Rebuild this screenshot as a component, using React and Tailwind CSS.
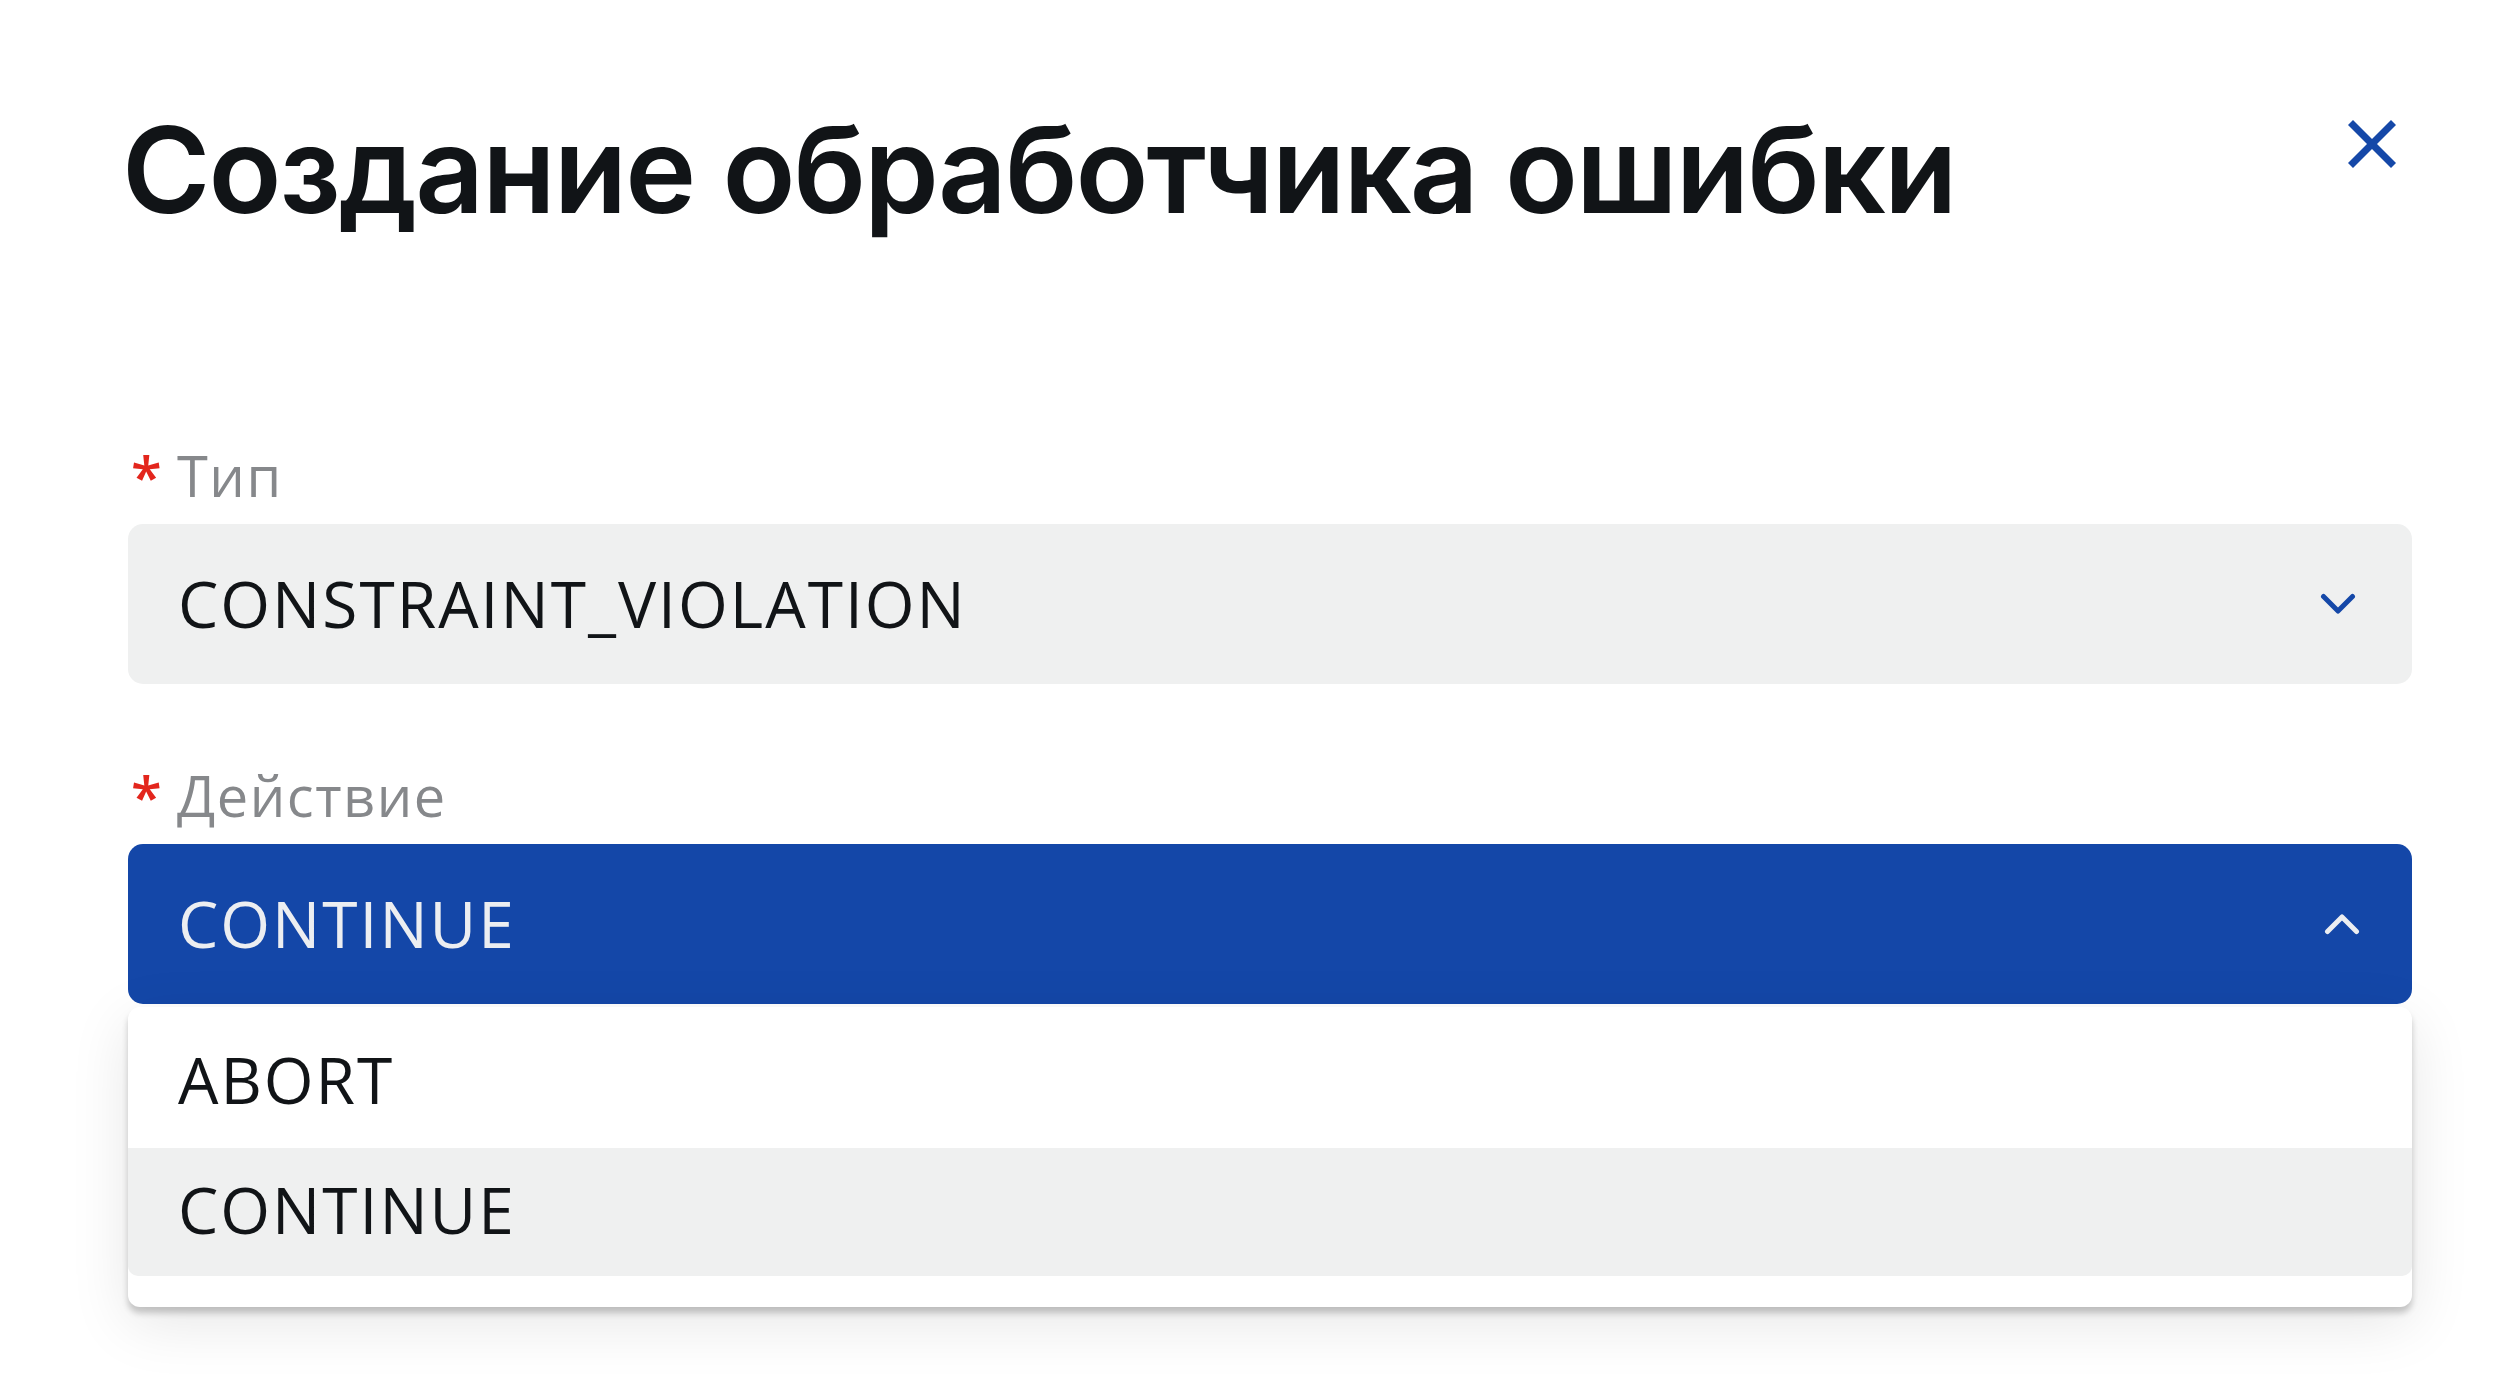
import React from "react";

function ChevronDown({ className }) {
  return (
    <svg viewBox="0 0 36 22" width="36" height="22" className={className} fill="none">
      <polyline points="3.5,3.5 18,18 32.5,3.5" stroke="currentColor" strokeWidth="5" strokeLinecap="round" strokeLinejoin="round" />
    </svg>
  );
}

function ChevronUp({ className }) {
  return (
    <svg viewBox="0 0 36 22" width="36" height="22" className={className} fill="none">
      <polyline points="3.5,18.5 18,4 32.5,18.5" stroke="currentColor" strokeWidth="5" strokeLinecap="round" strokeLinejoin="round" />
    </svg>
  );
}

function CloseIcon() {
  return (
    <svg viewBox="0 0 48 48" width="48" height="48" fill="none" className="text-[#1548a8]">
      <line x1="2.5" y1="2.5" x2="45.5" y2="45.5" stroke="currentColor" strokeWidth="7" />
      <line x1="45.5" y1="2.5" x2="2.5" y2="45.5" stroke="currentColor" strokeWidth="7" />
    </svg>
  );
}

function Label({ children }) {
  return (
    <div className="flex items-start h-[56px] text-[56px] leading-none font-['Open_Sans',sans-serif]">
      <span className="text-[#e3261d] font-semibold w-[49px] pl-[3px]">*</span>
      <span className="text-[#86888b] font-medium tracking-[1.5px]">{children}</span>
    </div>
  );
}

export default function App() {
  return (
    <div className="w-[2520px] h-[1374px] bg-white overflow-hidden font-['Open_Sans',sans-serif]">
      <div className="pl-[128px] pr-[108px]">
        <div className="flex items-start justify-between pt-[110px]">
          <h1 className="font-['Inter',sans-serif] font-semibold text-[120px] leading-none tracking-[-2px] text-[#111417] -ml-[6px]">
            Создание обработчика ошибки
          </h1>
          <button className="mt-[10px] mr-[16px]">
            <CloseIcon />
          </button>
        </div>

        <div className="mt-[217px]">
          <Label>Тип</Label>
          <div className="mt-[21px] h-[160px] rounded-[15px] bg-[#eff0f0] flex items-center justify-between pl-[50px] pr-[56px]">
            <span className="text-[64px] leading-none text-[#111417] font-medium tracking-[2px]">CONSTRAINT_VIOLATION</span>
            <ChevronDown className="text-[#1548a8]" />
          </div>
        </div>

        <div className="mt-[83px]">
          <Label>Действие</Label>
          <div className="relative mt-[21px]">
            <div className="h-[160px] rounded-[15px] bg-[#1447a8] flex items-center justify-between pl-[50px] pr-[52px]">
              <span className="text-[64px] leading-none text-[#eceef1] font-medium tracking-[2px]">CONTINUE</span>
              <ChevronUp className="text-[#eceef1]" />
            </div>
            <div className="absolute left-0 right-0 top-[163px] bg-white rounded-[12px] pt-[13px] pb-[31px] shadow-[0_6px_6px_rgba(0,0,0,0.2),0_16px_60px_rgba(0,0,0,0.1)]">
              <div className="h-[128px] flex items-center pl-[50px] pb-[9px]">
                <span className="text-[64px] leading-none text-[#111417] font-medium tracking-[2px]">ABORT</span>
              </div>
              <div className="h-[128px] flex items-center pl-[50px] pb-[5px] bg-[#eff0f0] rounded-b-[10px]">
                <span className="text-[64px] leading-none text-[#111417] font-medium tracking-[2px]">CONTINUE</span>
              </div>
            </div>
          </div>
        </div>
      </div>
    </div>
  );
}
